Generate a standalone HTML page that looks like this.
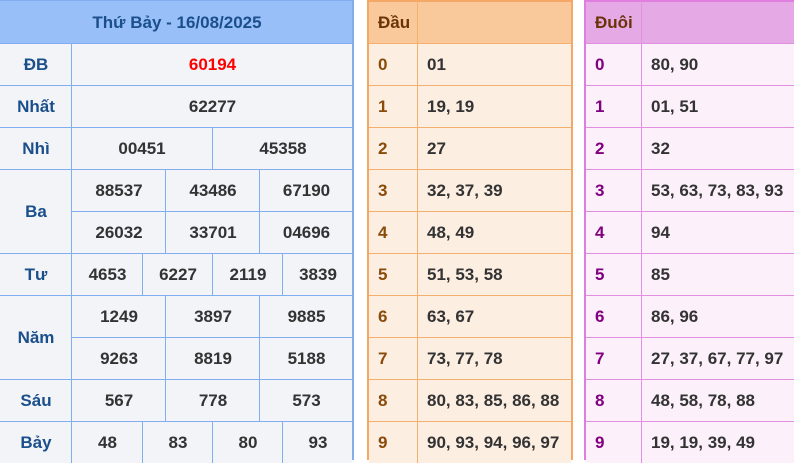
<!DOCTYPE html>
<html><head><meta charset="utf-8"><style>
*{margin:0;padding:0;box-sizing:border-box}
body{width:794px;height:460px;overflow:hidden;background:#fff;font-family:"Liberation Sans",Arial,sans-serif;font-weight:bold;font-size:17px;position:relative}
.c{position:absolute;display:flex;align-items:center;justify-content:center;color:#333}
.L{background:#f3f4f8;border-left:1px solid #82aef0;border-top:1px solid #82aef0}
.lb{color:#1a4f8b}
.M{background:#fdeee2;border-top:1px solid #f5b070;justify-content:flex-start;padding-left:9px}
.R{background:#fcf0fa;border-top:1px solid #e290e2;justify-content:flex-start;padding-left:9px}
.v.M{border-left:1px solid #f5b070}
.v.R{border-left:1px solid #e290e2}
.M.k{color:#8a4a0a}.R.k{color:#800080}
</style></head><body>
<div class="c" style="left:0;top:0;width:354px;height:44px;background:#99bff9;border-top:1px solid #82aef0;color:#1a4f8b">Thứ Bảy - 16/08/2025</div>

<div class="c L lb" style="left:-1px;top:43px;width:73px;height:42px">ĐB</div>
<div class="c L" style="left:71px;top:43px;width:282px;height:42px;color:#f00">60194</div>

<div class="c L lb" style="left:-1px;top:85px;width:73px;height:42px">Nhất</div>
<div class="c L" style="left:71px;top:85px;width:282px;height:42px">62277</div>

<div class="c L lb" style="left:-1px;top:127px;width:73px;height:42px">Nhì</div>
<div class="c L" style="left:71px;top:127px;width:141px;height:42px">00451</div>
<div class="c L" style="left:212px;top:127px;width:141px;height:42px">45358</div>

<div class="c L lb" style="left:-1px;top:169px;width:73px;height:84px">Ba</div>
<div class="c L" style="left:71px;top:169px;width:95px;height:42px">88537</div>
<div class="c L" style="left:165px;top:169px;width:95px;height:42px">43486</div>
<div class="c L" style="left:259px;top:169px;width:94px;height:42px">67190</div>
<div class="c L" style="left:71px;top:211px;width:95px;height:42px">26032</div>
<div class="c L" style="left:165px;top:211px;width:95px;height:42px">33701</div>
<div class="c L" style="left:259px;top:211px;width:94px;height:42px">04696</div>

<div class="c L lb" style="left:-1px;top:253px;width:73px;height:42px">Tư</div>
<div class="c L" style="left:71px;top:253px;width:72px;height:42px">4653</div>
<div class="c L" style="left:142px;top:253px;width:71px;height:42px">6227</div>
<div class="c L" style="left:212px;top:253px;width:71px;height:42px">2119</div>
<div class="c L" style="left:282px;top:253px;width:71px;height:42px">3839</div>

<div class="c L lb" style="left:-1px;top:295px;width:73px;height:84px">Năm</div>
<div class="c L" style="left:71px;top:295px;width:95px;height:42px">1249</div>
<div class="c L" style="left:165px;top:295px;width:95px;height:42px">3897</div>
<div class="c L" style="left:259px;top:295px;width:94px;height:42px">9885</div>
<div class="c L" style="left:71px;top:337px;width:95px;height:42px">9263</div>
<div class="c L" style="left:165px;top:337px;width:95px;height:42px">8819</div>
<div class="c L" style="left:259px;top:337px;width:94px;height:42px">5188</div>

<div class="c L lb" style="left:-1px;top:379px;width:73px;height:42px">Sáu</div>
<div class="c L" style="left:71px;top:379px;width:95px;height:42px">567</div>
<div class="c L" style="left:165px;top:379px;width:95px;height:42px">778</div>
<div class="c L" style="left:259px;top:379px;width:94px;height:42px">573</div>

<div class="c L lb" style="left:-1px;top:421px;width:73px;height:42px">Bảy</div>
<div class="c L" style="left:71px;top:421px;width:72px;height:42px">48</div>
<div class="c L" style="left:142px;top:421px;width:71px;height:42px">83</div>
<div class="c L" style="left:212px;top:421px;width:71px;height:42px">80</div>
<div class="c L" style="left:282px;top:421px;width:71px;height:42px">93</div>
<div style="position:absolute;left:352px;top:0;width:2px;height:460px;background:#82aef0"></div>

<!-- Dau -->
<div style="position:absolute;left:367px;top:0;width:206px;height:460px;background:#fdeee2"></div>
<div class="c M" style="left:369px;top:0;width:49px;height:43px;background:#f9c99b;color:#6b3208;border-top:2px solid #f5a865">Đầu</div>
<div class="c M v" style="left:417px;top:0;width:154px;height:43px;background:#f9c99b;border-top:2px solid #f5a865"></div>

<div class="c M k" style="left:369px;top:43px;width:49px;height:42px">0</div><div class="c M v" style="left:417px;top:43px;width:154px;height:42px">01</div>
<div class="c M k" style="left:369px;top:85px;width:49px;height:42px">1</div><div class="c M v" style="left:417px;top:85px;width:154px;height:42px">19, 19</div>
<div class="c M k" style="left:369px;top:127px;width:49px;height:42px">2</div><div class="c M v" style="left:417px;top:127px;width:154px;height:42px">27</div>
<div class="c M k" style="left:369px;top:169px;width:49px;height:42px">3</div><div class="c M v" style="left:417px;top:169px;width:154px;height:42px">32, 37, 39</div>
<div class="c M k" style="left:369px;top:211px;width:49px;height:42px">4</div><div class="c M v" style="left:417px;top:211px;width:154px;height:42px">48, 49</div>
<div class="c M k" style="left:369px;top:253px;width:49px;height:42px">5</div><div class="c M v" style="left:417px;top:253px;width:154px;height:42px">51, 53, 58</div>
<div class="c M k" style="left:369px;top:295px;width:49px;height:42px">6</div><div class="c M v" style="left:417px;top:295px;width:154px;height:42px">63, 67</div>
<div class="c M k" style="left:369px;top:337px;width:49px;height:42px">7</div><div class="c M v" style="left:417px;top:337px;width:154px;height:42px">73, 77, 78</div>
<div class="c M k" style="left:369px;top:379px;width:49px;height:42px">8</div><div class="c M v" style="left:417px;top:379px;width:154px;height:42px;white-space:nowrap">80, 83, 85, 86, 88</div>
<div class="c M k" style="left:369px;top:421px;width:49px;height:42px">9</div><div class="c M v" style="left:417px;top:421px;width:154px;height:42px;white-space:nowrap">90, 93, 94, 96, 97</div>
<div style="position:absolute;left:367px;top:0;width:2px;height:460px;background:#f5a865"></div>
<div style="position:absolute;left:571px;top:0;width:2px;height:460px;background:#f5a865"></div>

<!-- Duoi -->
<div style="position:absolute;left:584px;top:0;width:212px;height:460px;background:#fcf0fa"></div>
<div class="c R" style="left:586px;top:0;width:56px;height:43px;background:#e5aae6;color:#6b3208;border-top:2px solid #e07ee0">Đuôi</div>
<div class="c R v" style="left:641px;top:0;width:153px;height:43px;background:#e5aae6;border-top:2px solid #e07ee0"></div>

<div class="c R k" style="left:586px;top:43px;width:56px;height:42px">0</div><div class="c R v" style="left:641px;top:43px;width:153px;height:42px">80, 90</div>
<div class="c R k" style="left:586px;top:85px;width:56px;height:42px">1</div><div class="c R v" style="left:641px;top:85px;width:153px;height:42px">01, 51</div>
<div class="c R k" style="left:586px;top:127px;width:56px;height:42px">2</div><div class="c R v" style="left:641px;top:127px;width:153px;height:42px">32</div>
<div class="c R k" style="left:586px;top:169px;width:56px;height:42px">3</div><div class="c R v" style="left:641px;top:169px;width:153px;height:42px;white-space:nowrap">53, 63, 73, 83, 93</div>
<div class="c R k" style="left:586px;top:211px;width:56px;height:42px">4</div><div class="c R v" style="left:641px;top:211px;width:153px;height:42px">94</div>
<div class="c R k" style="left:586px;top:253px;width:56px;height:42px">5</div><div class="c R v" style="left:641px;top:253px;width:153px;height:42px">85</div>
<div class="c R k" style="left:586px;top:295px;width:56px;height:42px">6</div><div class="c R v" style="left:641px;top:295px;width:153px;height:42px">86, 96</div>
<div class="c R k" style="left:586px;top:337px;width:56px;height:42px">7</div><div class="c R v" style="left:641px;top:337px;width:153px;height:42px;white-space:nowrap">27, 37, 67, 77, 97</div>
<div class="c R k" style="left:586px;top:379px;width:56px;height:42px">8</div><div class="c R v" style="left:641px;top:379px;width:153px;height:42px">48, 58, 78, 88</div>
<div class="c R k" style="left:586px;top:421px;width:56px;height:42px">9</div><div class="c R v" style="left:641px;top:421px;width:153px;height:42px">19, 19, 39, 49</div>
<div style="position:absolute;left:584px;top:0;width:2px;height:460px;background:#e07ee0"></div>
</body></html>
